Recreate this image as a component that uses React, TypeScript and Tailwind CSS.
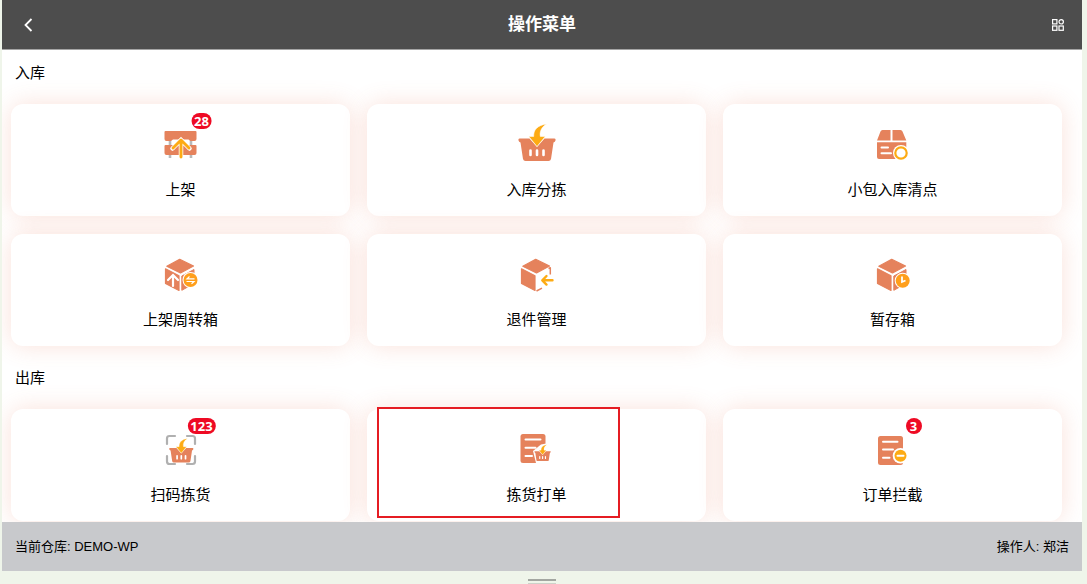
import type { ReactNode } from 'react';

type MenuItem = {
  label: string;
  icon: ReactNode;
  badge?: number;
  marked?: boolean;
};

type MenuSection = {
  title: string;
  items: MenuItem[];
};

const ORANGE = '#e5825c';
const YELLOW = '#fdab14';

function Basket() {
  return (
    <>
      <path
        d="M2.500 14.500H12.500l7.500 8.500 7.500-8.500h10q1.500 0 1 2-.4 1.700-2 1.900L34 35q-.5 2-2.500 2h-23q-2 0-2.500-2L3.500 18.400q-1.600-.2-2-1.900-.5-2 1-2z"
        fill={ORANGE}
      />
      <path d="M13.500 26.500v4.500M20 26.500v4.500M26.500 26.500v4.500" stroke="#fff" strokeWidth="2.600" strokeLinecap="round" />
      <path d="M29.500 0C20 1.500 16.500 6 16.700 12.500H11.800L20 22.500l8.200-10h-4.900C22.500 8 24 3.500 29.500 0z" fill={YELLOW} stroke="#fff" strokeWidth="0.500" />
    </>
  );
}

function Cube({ filled }: { filled?: boolean }) {
  return (
    <>
      <path d="M18.700 5.300 32.500 12 19.500 19 5.800 12.300z" fill={ORANGE} stroke={ORANGE} strokeWidth="1.200" strokeLinejoin="round" />
      <path d="M4.500 14.800 18 21.700V36.500L4.500 29.500z" fill={ORANGE} stroke={ORANGE} strokeWidth="1.200" strokeLinejoin="round" />
      {filled ? (
        <path d="M20.800 22 33 15.500V29.500L20.800 36.300z" fill={ORANGE} stroke={ORANGE} strokeLinejoin="round" />
      ) : (
        <path d="M31.500 14.500 33.300 13.800V20.500M19.500 37 25 34.200" stroke={ORANGE} strokeWidth="1.500" fill="none" strokeLinejoin="round" />
      )}
    </>
  );
}

const icons: Record<string, ReactNode> = {
  shelf: (
    <>
      <path d="M9 15V34M30 15V34" stroke="#b9b9b9" strokeWidth="2.600" />
      <path d="M4.500 7H34.500Q35.500 7 35.500 8V15q0 2-2 2H29.500L27.500 15.500H12L10 17H5.500q-2 0-2-2V8q0-1 1-1z" fill={ORANGE} />
      <path d="M4.500 21H34.500Q35.500 21 35.500 22V29q0 2-2 2H5.500q-2 0-2-2V22q0-1 1-1z" fill={ORANGE} />
      <path d="M11.500 24.500 20 16 28.500 24.500M20 16V33" stroke="#fff" strokeWidth="4.500" fill="none" strokeLinecap="round" />
      <path d="M12 24 20 16 28 24M20 16.500V33" stroke={YELLOW} strokeWidth="2.900" fill="none" strokeLinecap="round" strokeLinejoin="round" />
    </>
  ),
  basket: <Basket />,
  parcel: (
    <>
      <path d="M9.500 6H17.500V16.500H4L7.500 7.500Q8 6 9.500 6zM19.500 6H27.500Q29 6 29.500 7.500L33.300 16.500H19.500z" fill={ORANGE} />
      <path d="M4 18.300H33.300V33q0 2-2 2H6q-2 0-2-2z" fill={ORANGE} />
      <path d="M8.500 23.500H15M8.500 29.300H18" stroke="#fff" strokeWidth="2" strokeLinecap="round" />
      <circle cx="28" cy="29" r="8" fill="#fff" />
      <circle cx="28" cy="29" r="5.700" fill="#fff" stroke={YELLOW} strokeWidth="2.200" />
    </>
  ),
  turnover: (
    <>
      <Cube filled />
      <path d="M7 26 12 21 17 26M12 21.500V32" stroke="#fff" strokeWidth="2.200" fill="none" strokeLinecap="round" />
      <circle cx="29.500" cy="26" r="8" fill="#fff" />
      <circle cx="29.500" cy="26" r="7" fill="#ff9f1c" />
      <path d="M33.500 24.800H26L28.500 22.500M25.500 27.500H33L30.500 29.800" stroke="#fff" strokeWidth="1.200" fill="none" />
    </>
  ),
  returned: (
    <>
      <Cube />
      <path d="M35.500 26.300H25.500M29.500 22 25.300 26.300 29.500 30.600" stroke={YELLOW} strokeWidth="2.400" fill="none" strokeLinecap="round" strokeLinejoin="round" />
    </>
  ),
  storage: (
    <>
      <Cube filled />
      <circle cx="29.700" cy="26.700" r="8" fill="#fff" />
      <circle cx="29.700" cy="26.700" r="7" fill="#ff9f1c" />
      <path d="M29 22.500V28L32.500 26.500" stroke="#fff" strokeWidth="1.800" fill="none" />
    </>
  ),
  scan: (
    <>
      <path
        d="M6 15V9.500q0-2.500 2.500-2.500h5.500M26 7h5.500q2.500 0 2.500 2.500V15M34 27v5.500q0 2.500-2.500 2.500h-5.500M14 35H8.500q-2.500 0-2.500-2.500V27"
        stroke="#b0b0b0"
        strokeWidth="2.200"
        fill="none"
        strokeLinecap="round"
      />
      <g transform="translate(7.300 9.500) scale(.65)">
        <Basket />
      </g>
    </>
  ),
  pickList: (
    <>
      <rect x="3.500" y="5" width="25" height="29" rx="2.500" fill={ORANGE} />
      <path d="M8.500 10.500H23.500M8.500 18.700H18.500M8.500 27H15" stroke="#fff" strokeWidth="2" strokeLinecap="round" />
      <path d="M32 14 24 15.500 16 22 19 34H34V14z" fill="#fff" />
      <g transform="translate(16.800 15.800) scale(.44)">
        <Basket />
      </g>
    </>
  ),
  intercept: (
    <>
      <rect x="5" y="7" width="25" height="29" rx="2.500" fill={ORANGE} />
      <path d="M10 12.700H24.500M10 20.500H20M10 28.700H16.500" stroke="#fff" strokeWidth="2" strokeLinecap="round" />
      <circle cx="27.500" cy="26.700" r="7.800" fill="#fff" />
      <circle cx="27.500" cy="26.700" r="6" fill={YELLOW} />
      <path d="M24.500 26.700H30.500" stroke="#fff" strokeWidth="2" strokeLinecap="round" />
    </>
  ),
};

const sections: MenuSection[] = [
  {
    title: '入库',
    items: [
      { label: '上架', icon: icons.shelf, badge: 28 },
      { label: '入库分拣', icon: icons.basket },
      { label: '小包入库清点', icon: icons.parcel },
      { label: '上架周转箱', icon: icons.turnover },
      { label: '退件管理', icon: icons.returned },
      { label: '暂存箱', icon: icons.storage },
    ],
  },
  {
    title: '出库',
    items: [
      { label: '扫码拣货', icon: icons.scan, badge: 123 },
      { label: '拣货打单', icon: icons.pickList, marked: true },
      { label: '订单拦截', icon: icons.intercept, badge: 3 },
    ],
  },
];

function MenuCard({ item }: { item: MenuItem }) {
  return (
    <button
      type="button"
      className="relative flex flex-col items-center rounded-xl bg-white pt-5 pb-4 shadow-[0_0_24px_rgba(232,104,70,0.2)]"
    >
      <span className="relative block">
        <svg width="40" height="40" viewBox="0 0 40 40" fill="none" aria-hidden="true">
          {item.icon}
        </svg>
        {item.badge !== undefined && (
          <span className="absolute -top-[11px] left-[41px] h-4 min-w-4 -translate-x-1/2 rounded-full bg-[#ee0a24] px-[3px] text-center font-['Open_Sans',sans-serif] text-[13px] leading-4 font-bold text-white">
            {item.badge}
          </span>
        )}
      </span>
      <span className="mt-4 text-[15px] leading-5">{item.label}</span>
      {item.marked && (
        <span className="absolute -top-0.5 left-2.5 h-[111px] w-[243px] border-2 border-[#e51c23]" />
      )}
    </button>
  );
}

export default function App() {
  return (
    <div className="flex h-screen flex-col bg-[#eff5ea] pr-[5px] pl-0.5 font-['Liberation_Sans','Noto_Sans_CJK_SC',sans-serif] text-black">
      {/* Header */}
      <header className="flex h-[50px] shrink-0 items-center justify-between border-b border-[#a5a5a5] bg-[#4d4d4d] px-4 text-white">
        <button type="button" aria-label="返回" className="flex h-6 w-5 items-center justify-center">
          <svg width="12" height="16" viewBox="0 0 12 16" fill="none" stroke="currentColor" strokeWidth="1.800">
            <path d="M9.500 2 3.500 8l6 6" />
          </svg>
        </button>
        <h1 className="text-[17px] leading-6 font-bold">操作菜单</h1>
        <button type="button" aria-label="更多" className="flex h-6 w-5 items-center justify-end pr-0.5">
          <svg width="12" height="12" viewBox="0 0 12 12" fill="none" stroke="currentColor" strokeWidth="1.200">
            <rect x="0.600" y="0.600" width="4.300" height="4.300" />
            <circle cx="9.200" cy="2.800" r="2.200" />
            <rect x="0.600" y="7" width="4.300" height="4.300" />
            <rect x="7" y="7" width="4.300" height="4.300" />
          </svg>
        </button>
      </header>

      {/* Menu */}
      <main className="flex min-h-0 flex-1 flex-col gap-[9px] overflow-hidden bg-white pr-5 pl-[9px]">
        {sections.map((section) => (
          <section key={section.title}>
            <h2 className="px-1 pt-3 pb-5 text-[15px] leading-[22px]">{section.title}</h2>
            <div className="grid grid-cols-3 gap-x-[17px] gap-y-[18px]">
              {section.items.map((item) => (
                <MenuCard key={item.label} item={item} />
              ))}
            </div>
          </section>
        ))}
      </main>

      {/* Status bar */}
      <footer className="flex h-[49px] shrink-0 items-center justify-between bg-[#c8c9cc] px-[13px] text-[13px]">
        <span>当前仓库: DEMO-WP</span>
        <span>操作人: 郑洁</span>
      </footer>
      <div className="flex h-[13px] shrink-0 flex-col items-center justify-end gap-0.5">
        <span className="h-0.5 w-7 bg-[#a3a7a1]" />
        <span className="h-px w-7 bg-[#cdd2c9]" />
      </div>
    </div>
  );
}
